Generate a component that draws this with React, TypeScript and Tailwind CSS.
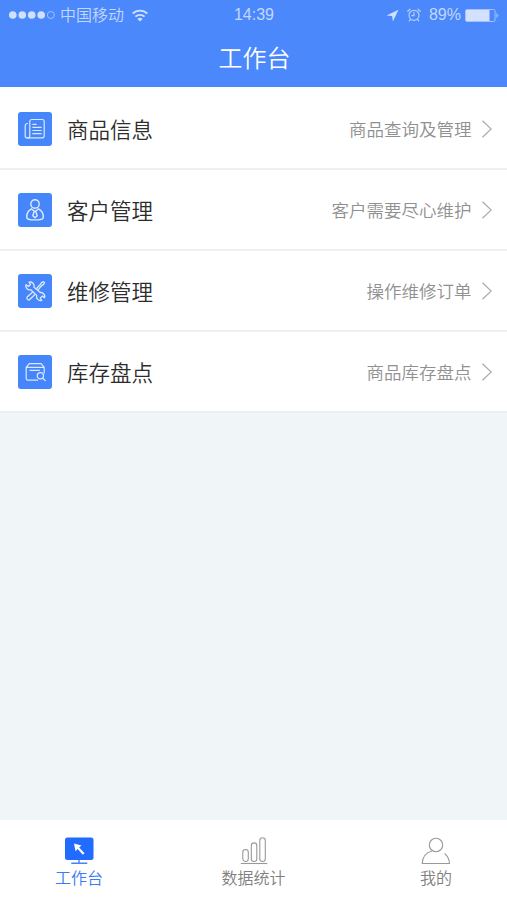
import type { ReactNode } from "react";

interface MenuItem {
  title: string;
  desc: string;
  icon: ReactNode;
}

interface TabItem {
  label: string;
  icon: ReactNode;
  width: string;
  active?: boolean;
}

const InfoIcon = () => (
  <svg viewBox="0 0 34 34" className="size-[34px]" fill="none" stroke="#dce8ff" strokeWidth="1.2" strokeLinecap="round" strokeLinejoin="round">
    <path d="M11.800 11V9.400a1.900 1.900 0 0 1 1.900-1.900h10.600a1.900 1.900 0 0 1 1.900 1.900v14.300a2.200 2.200 0 0 1-2.200 2.200H9.500" />
    <path d="M11.800 11.500v12.200a2.300 2.300 0 0 1-4.600 0V13.800a2.300 2.300 0 0 1 2.300-2.300" />
    <path d="M14.800 12.300h3.400M14.800 15.300h8.400M14.800 18.500h8.400M14.800 21.700h8.400" />
  </svg>
);

const CustomerIcon = () => (
  <svg viewBox="0 0 34 34" className="size-[34px]" fill="none" stroke="#e2ecff" strokeWidth="1.4" strokeLinecap="round" strokeLinejoin="round">
    <circle cx="17" cy="11" r="4.200" />
    <path d="M13.500 15.800c-3.400 1.800-5 5-4.700 8.600 0 1.400 3.500 2.500 8.200 2.500s8.200-1.100 8.200-2.500c.3-3.600-1.300-6.800-4.700-8.600" />
    <path d="M14 16.500l3 2 3-2M16.200 18.500l-1.400 4.300 2.200 2 2.200-2-1.400-4.300" />
  </svg>
);

const RepairIcon = () => (
  <svg viewBox="0 0 34 34" className="size-[34px]" fill="none" stroke="#dce8ff" strokeWidth="1.3" strokeLinecap="round" strokeLinejoin="round">
    <path d="M11 8.200a4 4 0 0 1 5 5l6.300 5.300a4 4 0 0 1 4.200 5.200l-2.300-1.600-2 2 1.500 2.300a4 4 0 0 1-5-5l-5.900-5.600a4 4 0 0 1-4.800-5.200l2.300 1.900 2.200-2z" />
    <path d="M18.800 14.200l4-4.200.6-1.400 2.100-1 1 1-1 2.100-1.400.6-3.800 4.300" />
    <path d="M14.200 18.500l-4.800 4.300a1.700 1.700 0 0 0 2.600 2.500l4.600-4.600" />
  </svg>
);

const StockIcon = () => (
  <svg viewBox="0 0 34 34" className="size-[34px]" fill="none" stroke="#dce8ff" strokeWidth="1.2" strokeLinecap="round" strokeLinejoin="round">
    <path d="M19.500 25.200H10A1.800 1.800 0 0 1 8.200 23.400v-11l3-3.800h12l3 3.800V18M8.200 12.400h18" />
    <path d="M12 15.300h9.500" />
    <circle cx="22.400" cy="20.800" r="3.100" />
    <path d="M24.700 23.100l2.500 2.400" />
  </svg>
);

const ChevronIcon = () => (
  <svg viewBox="0 0 10 18" className="h-[18px] w-[10px]" fill="none" stroke="#aaaaaa" strokeWidth="1.200">
    <path d="M.5.800L9.200 9 .5 17.200" />
  </svg>
);

const WorkbenchIcon = () => (
  <svg viewBox="0 0 30 28" className="h-[28px] w-[30px]">
    <rect x="1" y="0.500" width="28.500" height="22.500" rx="2.500" fill="#216bff" />
    <path d="M15 23v3M7.300 26.300h16" stroke="#4a83f7" strokeWidth="1.400" />
    <path d="M10 6.500l7.500 2-2.300 2.100 5.300 5.600-1.600 1.500-5.300-5.600-2.100 2.200z" fill="#fff" />
  </svg>
);

const StatsIcon = () => (
  <svg viewBox="0 0 30 28" className="h-[28px] w-[30px]" fill="none" stroke="#999999" strokeWidth="1.100">
    <rect x="3.800" y="12.500" width="5.500" height="12" rx="2.750" />
    <rect x="12.300" y="5.900" width="5.500" height="18.600" rx="2.750" />
    <rect x="20.800" y="0.800" width="5.500" height="23.700" rx="2.750" />
    <path d="M1.800 26.500h26.500" />
  </svg>
);

const MineIcon = () => (
  <svg viewBox="0 0 30 28" className="h-[28px] w-[30px]" fill="none" stroke="#999999" strokeWidth="1.100" strokeLinecap="round" strokeLinejoin="round">
    <circle cx="15" cy="8" r="6.700" />
    <path d="M11 14C5 15.500 1.600 20 1.200 26.500h27.300c-.3-4.200-1.800-7.500-4.700-9.700" />
  </svg>
);

const menus: MenuItem[] = [
  { title: "商品信息", desc: "商品查询及管理", icon: <InfoIcon /> },
  { title: "客户管理", desc: "客户需要尽心维护", icon: <CustomerIcon /> },
  { title: "维修管理", desc: "操作维修订单", icon: <RepairIcon /> },
  { title: "库存盘点", desc: "商品库存盘点", icon: <StockIcon /> },
];

const tabs: TabItem[] = [
  { label: "工作台", icon: <WorkbenchIcon />, width: "w-[158px]", active: true },
  { label: "数据统计", icon: <StatsIcon />, width: "w-[191px]" },
  { label: "我的", icon: <MineIcon />, width: "w-[174px]" },
];

function StatusBar() {
  return (
    <div className="grid h-[30px] grid-cols-[1fr_auto_1fr] items-center pl-[9px] pr-[8px] text-[16px] leading-none text-[#c3d7ff]">
      <div className="flex items-center">
        <svg viewBox="0 0 46 10" className="h-[10px] w-[46px]" fill="#d0e0ff">
          <circle cx="3.800" cy="5" r="3.800" />
          <circle cx="13.300" cy="5" r="3.800" />
          <circle cx="22.700" cy="5" r="3.800" />
          <circle cx="32.200" cy="5" r="3.800" />
          <circle cx="41.800" cy="5" r="3.500" fill="none" stroke="#a9c6ff" strokeWidth="0.900" />
        </svg>
        <span className="-mt-[2px] ml-[5px] font-[350]">中国移动</span>
        {/* wifi */}
        <svg viewBox="0 0 16 13" className="ml-[8px] h-[13px] w-[16px]" fill="none" stroke="#d0e0ff" strokeWidth="1.800">
          <path d="M.7 4.600a10.500 10.500 0 0 1 14.600 0M3.400 7.700a6.600 6.600 0 0 1 9.200 0" />
          <path d="M8 12.500L5.400 10a3.800 3.800 0 0 1 5.200 0z" fill="#d0e0ff" stroke="none" />
        </svg>
      </div>
      <span className="font-['Liberation_Sans']">14:39</span>
      <div className="flex items-center justify-end">
        <svg viewBox="0 0 13 13" className="h-[13px] w-[13px]" fill="#d0e0ff">
          <path d="M12.500.8L.5 6.500l5.600.5.800 5.500z" />
        </svg>
        <svg viewBox="0 0 14 14" className="ml-[8px] h-[14px] w-[14px]" fill="none" stroke="#b4cdff" strokeWidth="1.200" strokeLinecap="round">
          <circle cx="7" cy="7.300" r="5" />
          <path d="M7 4.500v3.100H4.800M.8 3.300L3 1.200M13.200 3.300L11 1.200M3.400 11.300l-1.200 1.500M10.600 11.300l1.200 1.500" />
        </svg>
        <span className="ml-[8px] font-['Liberation_Sans']">89%</span>
        <svg viewBox="0 0 34 13" className="ml-[4px] h-[13px] w-[34px]">
          <rect x="0.500" y="0.500" width="29.500" height="12" rx="1.500" fill="none" stroke="#a3c1ff" />
          <rect x="1" y="1" width="23.500" height="11" fill="#d3e1ff" />
          <path d="M31.200 3.500l2.500 3-2.500 3z" fill="#8db3ff" />
        </svg>
      </div>
    </div>
  );
}

export default function App() {
  return (
    <div className="flex h-[900px] w-[507px] flex-col overflow-hidden bg-[#f0f5f7] font-['Noto_Sans_CJK_SC',sans-serif]">
      <header className="h-[87px] bg-[#4b88fb]">
        <StatusBar />
        <h1 className="mt-[9px] pl-[2px] text-center text-[24px] font-[350] leading-[36px] text-white">工作台</h1>
      </header>

      <main className="flex-1">
        <ul className="bg-white pt-[2px]">
          {menus.map((item) => (
            <li key={item.title} className="flex h-[81px] items-center border-b-2 border-[#eeeff0] pl-[18px] pr-[15px]">
              <div className="size-[34px] rounded-[3px] bg-[#4686fb]">{item.icon}</div>
              <span className="ml-[15px] text-[21.500px] font-[350] leading-[32px] text-[#2c2c2c]">{item.title}</span>
              <span className="ml-auto mr-[10.500px] text-[17.500px] font-[350] leading-[26px] text-[#909090]">{item.desc}</span>
              <ChevronIcon />
            </li>
          ))}
        </ul>
      </main>

      <nav className="flex h-[80px] bg-white pt-[17px]">
        {tabs.map((tab) => (
          <div key={tab.label} className={`flex shrink-0 flex-col items-center ${tab.width}`}>
            {tab.icon}
            <span className={`text-[16px] font-[350] leading-[24px] ${tab.active ? "text-[#397bf7]" : "text-[#808080]"}`}>
              {tab.label}
            </span>
          </div>
        ))}
      </nav>
    </div>
  );
}
